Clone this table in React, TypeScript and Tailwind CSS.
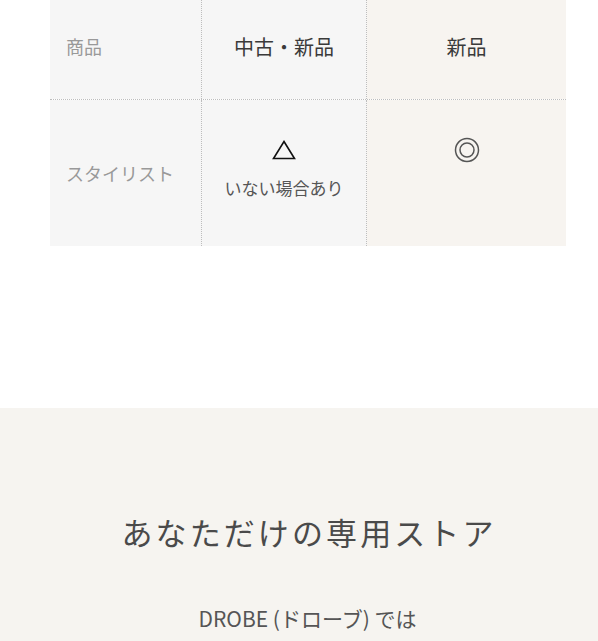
export default function App() {
  const font = { fontFamily: '"Noto Sans CJK JP", "Noto Sans", sans-serif' };
  return (
    <div className="w-[598px] h-[641px] overflow-hidden bg-white" style={font}>
      <div className="ml-[50px] w-[516px] flex flex-col">
        <div className="flex h-[100px] border-b border-dotted border-[#bdbdbd]">
          <div className="w-[152px] bg-[#f6f6f6] border-r border-dotted border-[#bdbdbd] flex items-center pl-[16px] pb-[6px] text-[18px] text-[#999]">
            商品
          </div>
          <div className="w-[165px] bg-[#f6f6f6] border-r border-dotted border-[#bdbdbd] flex items-center justify-center pb-[6px] text-[20px] text-[#3a3a3a]">
            中古・新品
          </div>
          <div className="flex-1 bg-[#f7f4f0] flex items-center justify-center pb-[6px] text-[20px] text-[#3a3a3a]">
            新品
          </div>
        </div>
        <div className="flex h-[146px]">
          <div className="w-[152px] bg-[#f6f6f6] border-r border-dotted border-[#bdbdbd] flex items-center pl-[16px] text-[18px] text-[#999]">
            スタイリスト
          </div>
          <div className="w-[165px] bg-[#f6f6f6] border-r border-dotted border-[#bdbdbd] flex flex-col items-center pt-[36px]">
            <svg width="24" height="20" viewBox="0 0 24 20" className="mt-[4px]">
              <path d="M12 1.5 L22.5 18.5 L1.5 18.5 Z" fill="none" stroke="#111" strokeWidth="1.6" strokeLinejoin="miter" />
            </svg>
            <div className="mt-[17px] text-[17px] text-[#555] leading-[22px]">いない場合あり</div>
          </div>
          <div className="flex-1 bg-[#f7f4f0] flex flex-col items-center pt-[36px]">
            <svg width="26" height="26" viewBox="0 0 26 26" className="mt-[1px]">
              <circle cx="13" cy="13" r="11.5" fill="none" stroke="#555" strokeWidth="1.5" />
              <circle cx="13" cy="13" r="7" fill="none" stroke="#555" strokeWidth="1.5" />
            </svg>
          </div>
        </div>
      </div>
      <div className="h-[162px]" />
      <div className="bg-[#f6f4f0] h-[233px] flex flex-col items-center pl-[17px]">
        <div className="mt-[102px] text-[31px] leading-[44px] tracking-[0.1em] text-[#4a4a4a] pl-[3px]">
          あなただけの専用ストア
        </div>
        <div className="mt-[50px] text-[21px] leading-[28px] text-[#555]">
          DROBE (ドローブ) では
        </div>
      </div>
    </div>
  );
}
